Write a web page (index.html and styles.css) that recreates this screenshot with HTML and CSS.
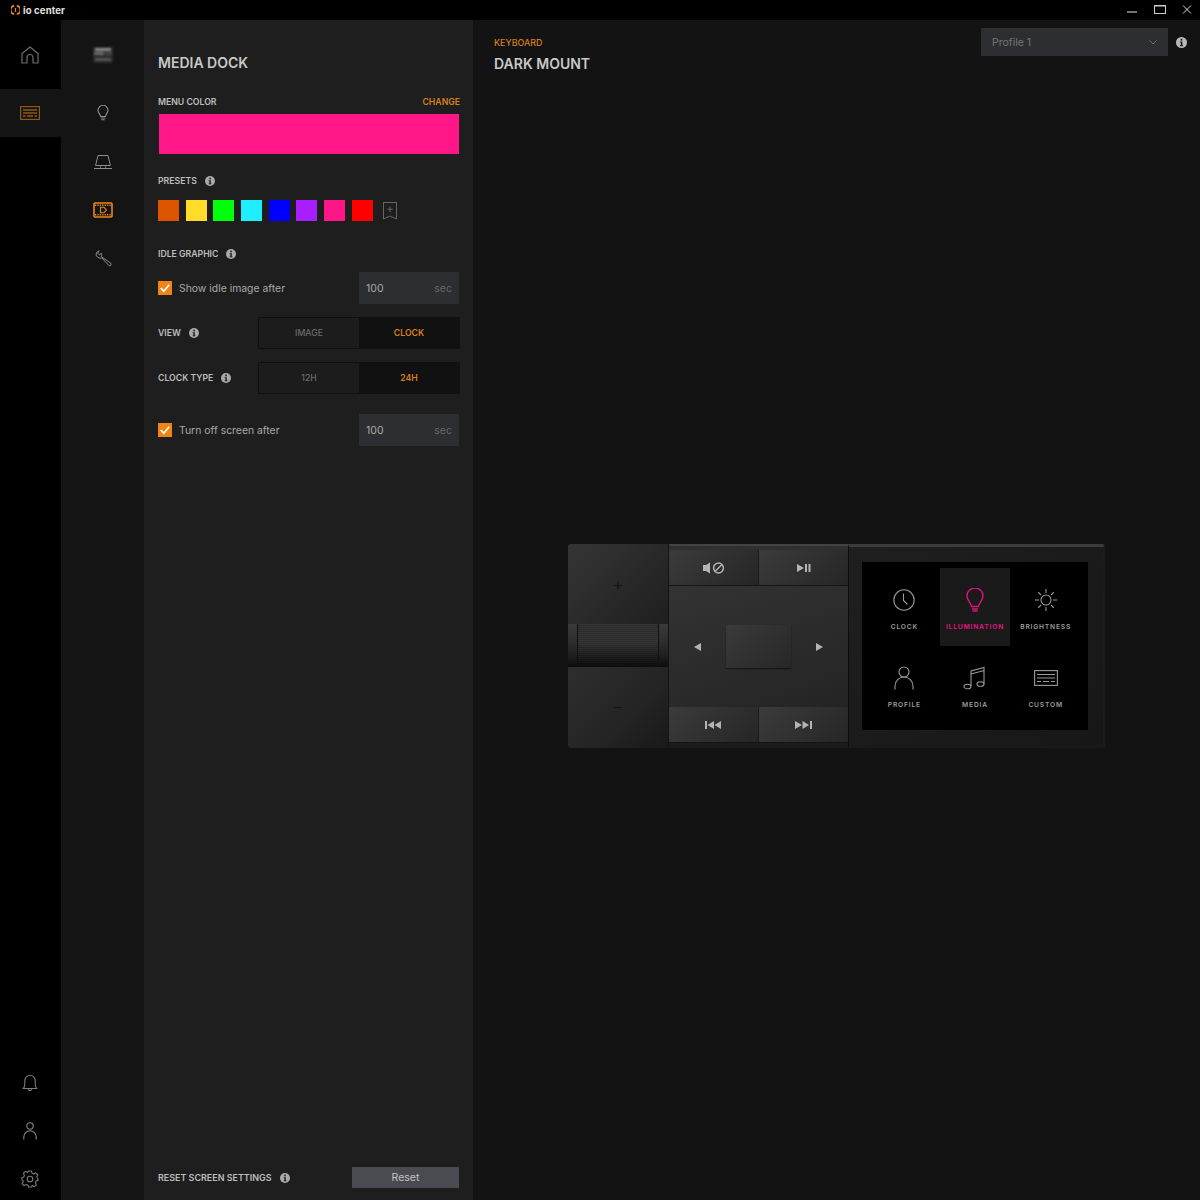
FILE: index.html
```html
<!DOCTYPE html>
<html lang="en">
<head>
    <meta charset="UTF-8">
    <meta name="viewport" content="width=device-width, initial-scale=1.0">
    <title>io center</title>
    <link rel="stylesheet" href="styles.css">
</head>
<body>
    <svg class="defs" width="0" height="0">
        <symbol id="info" viewBox="0 0 10 10">
            <circle cx="5" cy="5" r="5" fill="currentColor"/>
            <rect x="4.2" y="1.7" width="1.6" height="1.6" fill="#1e1e1e"/>
            <path d="M3.6 4.2H5.8V7.4H6.5V8.3H3.6V7.4H4.3V5.1H3.6Z" fill="#1e1e1e"/>
        </symbol>
    </svg>

    <header class="titlebar">
        <div class="brand">
            <svg width="9" height="10" viewBox="0 0 9 10" fill="none" stroke="#e8811a" stroke-width="2">
                <path d="M3.2 1.1A3.7 3.9 0 0 0 3.2 8.9M5.8 1.1A3.7 3.9 0 0 1 5.8 8.9"/>
                <path d="M4.5 3V7" stroke-width="1.2"/>
            </svg>
            <span>io center</span>
        </div>
        <div class="window-controls">
            <svg width="12" height="12" viewBox="0 0 12 12"><path d="M1 8H11" stroke="#e6e6e6" stroke-width="1"/></svg>
            <svg width="12" height="12" viewBox="0 0 12 12" fill="none"><rect x="0.5" y="1.5" width="11" height="8" stroke="#d0d0d0"/><path d="M0 2H12" stroke="#d0d0d0"/></svg>
            <svg width="12" height="12" viewBox="0 0 12 12" fill="none"><path d="M2 1.5L10 9.5M10 1.5L2 9.5" stroke="#d8d8d8"/></svg>
        </div>
    </header>

    <div class="app">
        <nav class="rail">
            <div class="rail-item home">
                <svg width="20" height="20" viewBox="0 0 20 20" fill="none" stroke="#6e6e6e" stroke-width="1.2">
                    <path d="M2 8.5L10 2L18 8.5V18H13V12.5A3 3 0 0 0 7 12.5V18H2Z" stroke-linejoin="round"/>
                </svg>
            </div>
            <div class="rail-item active">
                <svg width="20" height="14" viewBox="0 0 20 14" fill="none" stroke="#8f5716" stroke-width="1.2">
                    <rect x="0.6" y="0.6" width="18.8" height="12.8"/>
                    <path d="M3 4H17M3 7H17" stroke-width="1.3"/>
                    <path d="M3 10H5.5M7 10H13M14.5 10H17" stroke-width="1.3"/>
                </svg>
            </div>
            <div class="rail-bottom">
                <div class="rail-item">
                    <svg width="16" height="18" viewBox="0 0 16 18" fill="none" stroke="#7c7c7c" stroke-width="1.1">
                        <path d="M1 14.5C2.5 13.5 2.8 12 2.8 10V6.5A5.2 5.2 0 0 1 13.2 6.5V10C13.2 12 13.5 13.5 15 14.5Z" stroke-linejoin="round"/>
                        <path d="M6.3 15.2A1.8 1.8 0 0 0 9.7 15.2"/>
                    </svg>
                </div>
                <div class="rail-item">
                    <svg width="14" height="18" viewBox="0 0 14 18" fill="none" stroke="#8a8a8a" stroke-width="1.1">
                        <circle cx="7" cy="4" r="3.2"/>
                        <path d="M0.8 17.5V15A6.2 6.2 0 0 1 13.2 15V17.5"/>
                    </svg>
                </div>
                <div class="rail-item">
                    <svg width="18" height="18" viewBox="0 0 18 18" fill="none" stroke="#7c7c7c" stroke-width="1.1">
                        <circle cx="9" cy="9" r="2.8"/>
                        <path d="M7.5 1H10.5L11 3.2L12.9 4L14.8 2.8L16.9 5L15.7 6.8L16.5 8L17 9.7V10.4L15 11L14.3 12.8L15.4 14.8L13.2 16.7L11.3 15.6L10.5 17H7.5L7 15.2L5 14.4L3 15.7L1 13.6L2.3 11.7L1.7 10.4L0.9 10V7.7L2.8 7L3.4 5.2L2.4 3.2L4.6 1.3L6.5 2.5Z" stroke-linejoin="round"/>
                    </svg>
                </div>
            </div>
        </nav>

        <nav class="subrail">
            <div class="subrail-item">
                <svg class="thumb" width="24" height="20" viewBox="0 0 24 20">
                    <rect x="2" y="2" width="20" height="16" fill="#2a2a2a"/>
                    <rect x="4" y="3" width="16" height="3" fill="#8a8a8a"/>
                    <rect x="3" y="7" width="10" height="3" fill="#6c6c6c"/>
                    <rect x="14" y="7" width="7" height="3" fill="#484848"/>
                    <rect x="4" y="13" width="16" height="3" fill="#565656"/>
                </svg>
            </div>
            <div class="subrail-item">
                <svg width="12" height="16" viewBox="0 0 12 16" fill="none" stroke="#8d8d8d" stroke-width="1.1">
                    <path d="M3.6 11.5C3.4 9 1 8 1 5.3A5 5 0 0 1 11 5.3C11 8 8.6 9 8.4 11.5Z"/>
                    <path d="M3.8 13H8.2M4.3 14.8H7.7"/>
                </svg>
            </div>
            <div class="subrail-item">
                <svg width="18" height="16" viewBox="0 0 18 16" fill="none" stroke="#8d8d8d" stroke-width="1">
                    <path d="M1.6 11.5L4 1.5H14L16.4 11.5Z" stroke-linejoin="round"/>
                    <path d="M0 14.5H18"/>
                    <path d="M6.5 11.5V14.5M11.5 11.5V14.5" stroke-width="0.7"/>
                </svg>
            </div>
            <div class="subrail-item">
                <svg width="20" height="16" viewBox="0 0 20 16" fill="none" stroke="#e8871e">
                    <rect x="1" y="1" width="18" height="14" rx="1" stroke-width="1.6"/>
                    <path d="M2 3.2H18M2 12.8H18" stroke-width="1.6" stroke-dasharray="1.3 1.1"/>
                    <path d="M7.5 5.3H11L13.5 8L11 10.7H7.5Z" stroke-width="1.1"/>
                </svg>
            </div>
            <div class="subrail-item">
                <svg width="17" height="17" viewBox="0 0 17 17" fill="none" stroke="#8d8d8d" stroke-width="1" stroke-linejoin="round">
                    <path d="M4.2 0.8L2.6 3L4.4 5L6.4 3.2C7 4.4 6.8 5.6 6 6.4L15.9 13.3C16.8 14.4 15.4 16.6 14 15.7L6.9 8C5.3 8.6 2.7 8 1.4 5.8C0.4 3.6 2.2 1 4.2 0.8Z"/>
                </svg>
            </div>
        </nav>

        <aside class="panel">
            <h2 class="panel-title">MEDIA DOCK</h2>

            <div class="label-row color-head">
                <span class="label">MENU COLOR</span>
                <span class="label link">CHANGE</span>
            </div>
            <div class="color-bar"></div>

            <div class="label-row presets-head">
                <span class="label">PRESETS</span>
                <svg class="info"><use href="#info"/></svg>
            </div>
            <div class="presets">
                <span class="swatch c-orange"></span>
                <span class="swatch c-yellow"></span>
                <span class="swatch c-green"></span>
                <span class="swatch c-cyan"></span>
                <span class="swatch c-blue"></span>
                <span class="swatch c-purple"></span>
                <span class="swatch c-pink"></span>
                <span class="swatch c-red"></span>
                <svg class="bookmark" width="14" height="18" viewBox="0 0 14 18" fill="none" stroke="#666">
                    <path d="M0.5 0.5H13.5V17L7 14L0.5 17Z"/>
                    <path d="M7 4.5V10M4.2 7.2H9.8"/>
                </svg>
            </div>

            <div class="label-row idle-head">
                <span class="label">IDLE GRAPHIC</span>
                <svg class="info"><use href="#info"/></svg>
            </div>
            <div class="check-row first">
                <label class="check">
                    <span class="box"><svg width="14" height="14" viewBox="0 0 14 14" fill="none"><path d="M2.8 7L5.8 10.2L11.2 3.8" stroke="#fff" stroke-width="1.7"/></svg></span>
                    Show idle image after
                </label>
                <div class="number"><span>100</span><span class="unit">sec</span></div>
            </div>

            <div class="toggle-row view-row">
                <div class="toggle-label">
                    <span class="label">VIEW</span>
                    <svg class="info"><use href="#info"/></svg>
                </div>
                <div class="toggle">
                    <span>IMAGE</span>
                    <span class="on">CLOCK</span>
                </div>
            </div>
            <div class="toggle-row type-row">
                <div class="toggle-label">
                    <span class="label">CLOCK TYPE</span>
                    <svg class="info"><use href="#info"/></svg>
                </div>
                <div class="toggle">
                    <span>12H</span>
                    <span class="on">24H</span>
                </div>
            </div>

            <div class="check-row last">
                <label class="check">
                    <span class="box"><svg width="14" height="14" viewBox="0 0 14 14" fill="none"><path d="M2.8 7L5.8 10.2L11.2 3.8" stroke="#fff" stroke-width="1.7"/></svg></span>
                    Turn off screen after
                </label>
                <div class="number"><span>100</span><span class="unit">sec</span></div>
            </div>

            <div class="reset-row">
                <div class="toggle-label">
                    <span class="label wide">RESET SCREEN SETTINGS</span>
                    <svg class="info"><use href="#info"/></svg>
                </div>
                <button class="reset">Reset</button>
            </div>
        </aside>

        <main class="main">
            <div class="main-head">
                <div>
                    <div class="crumb">KEYBOARD</div>
                    <h1 class="device">DARK MOUNT</h1>
                </div>
                <div class="profile-wrap">
                    <div class="profile">
                        <span>Profile 1</span>
                        <svg width="8" height="5" viewBox="0 0 8 5" fill="none"><path d="M0.5 0.5L4 4L7.5 0.5" stroke="#6f7073"/></svg>
                    </div>
                    <svg class="info big"><use href="#info"/></svg>
                </div>
            </div>

            <div class="stage">
                <div class="dock">
                    <div class="volume">
                        <div class="vol-btn plus">+</div>
                        <div class="roller"><div class="roller-grip"></div></div>
                        <div class="vol-btn minus">&minus;</div>
                    </div>

                    <div class="controls">
                        <div class="btn-row top">
                            <div class="btn">
                                <svg width="22" height="12" viewBox="0 0 22 12" fill="none">
                                    <path d="M0 3H3L7 0.5V11.5L3 9H0Z" fill="#b4b4b4"/>
                                    <circle cx="15.5" cy="6" r="4.9" stroke="#b4b4b4" stroke-width="1.5"/>
                                    <path d="M12 9.5L19 2.5" stroke="#b4b4b4" stroke-width="1.5"/>
                                </svg>
                            </div>
                            <div class="btn">
                                <svg width="14" height="8" viewBox="0 0 14 8" fill="#b4b4b4"><path d="M0 0L7 4L0 8Z"/><rect x="8" width="2" height="8"/><rect x="11.5" width="2" height="8"/></svg>
                            </div>
                        </div>
                        <div class="pad">
                            <svg width="7" height="8" viewBox="0 0 7 8" fill="#b4b4b4"><path d="M7 0V8L0 4Z"/></svg>
                            <div class="pad-center"></div>
                            <svg width="7" height="8" viewBox="0 0 7 8" fill="#b4b4b4"><path d="M0 0V8L7 4Z"/></svg>
                        </div>
                        <div class="btn-row bottom">
                            <div class="btn">
                                <svg width="17" height="8" viewBox="0 0 17 8" fill="#b4b4b4"><rect width="2" height="8"/><path d="M9 0V8L2.5 4Z"/><path d="M16 0V8L9.5 4Z"/></svg>
                            </div>
                            <div class="btn">
                                <svg width="17" height="8" viewBox="0 0 17 8" fill="#b4b4b4"><path d="M0 0V8L7 4Z"/><path d="M7.5 0V8L14 4Z"/><rect x="15" width="2" height="8"/></svg>
                            </div>
                        </div>
                    </div>

                    <div class="screen-frame">
                        <div class="screen">
                            <div class="tile">
                                <svg width="22" height="22" viewBox="0 0 22 22" fill="none" stroke="#9a9a9a" stroke-width="1.1">
                                    <circle cx="11" cy="11" r="10.2"/>
                                    <path d="M10.5 4.5V11.5L14.5 15.5"/>
                                </svg>
                                <span>CLOCK</span>
                            </div>
                            <div class="tile selected">
                                <svg width="18" height="24" viewBox="0 0 18 24" fill="none" stroke="#d9147c" stroke-width="1.4">
                                    <path d="M5.5 18.5C5 14.5 1 12.5 1 8A8 8 0 0 1 17 8C17 12.5 13 14.5 12.5 18.5Z"/>
                                    <path d="M6 21H12M6.5 23H11.5"/>
                                </svg>
                                <span>ILLUMINATION</span>
                            </div>
                            <div class="tile">
                                <svg width="24" height="24" viewBox="0 0 24 24" fill="none" stroke="#9a9a9a" stroke-width="1.1">
                                    <circle cx="12" cy="12" r="5"/>
                                    <path d="M12 1V5M12 19V23M1 12H5M19 12H23M4.2 4.2L7 7M17 17L19.8 19.8M4.2 19.8L7 17M17 7L19.8 4.2"/>
                                </svg>
                                <span>BRIGHTNESS</span>
                            </div>
                            <div class="tile">
                                <svg width="20" height="24" viewBox="0 0 20 24" fill="none" stroke="#9a9a9a" stroke-width="1.1">
                                    <circle cx="10" cy="6" r="5"/>
                                    <path d="M1 23.5V20A9 9 0 0 1 19 20V23.5"/>
                                </svg>
                                <span>PROFILE</span>
                            </div>
                            <div class="tile">
                                <svg width="24" height="24" viewBox="0 0 24 24" fill="none" stroke="#9a9a9a" stroke-width="1.1">
                                    <ellipse cx="4.5" cy="20.5" rx="3.5" ry="2.3"/>
                                    <ellipse cx="17.5" cy="18" rx="3.5" ry="2.3"/>
                                    <path d="M8 20V5L21 1.5V18M8 8L21 4.5"/>
                                </svg>
                                <span>MEDIA</span>
                            </div>
                            <div class="tile">
                                <svg width="24" height="16" viewBox="0 0 24 16" fill="none" stroke="#9a9a9a" stroke-width="1.1">
                                    <rect x="0.6" y="0.6" width="22.8" height="14.8"/>
                                    <path d="M3 4.5H21M3 8H21"/>
                                    <path d="M3 11.5H7M9 11.5H15M17 11.5H21"/>
                                </svg>
                                <span>CUSTOM</span>
                            </div>
                        </div>
                    </div>
                </div>
            </div>
        </main>
    </div>
</body>
</html>
```
FILE: styles.css
```css
* {
    box-sizing: border-box;
}
html, body {
    height: 100%;
}
body {
    margin: 0;
    display: flex;
    flex-direction: column;
    background: #000;
    color: #c8c8c8;
    font-family: 'Inter', 'Liberation Sans', sans-serif;
    overflow: hidden;
}
.defs {
    position: absolute;
}

/* title bar */
.titlebar {
    height: 20px;
    flex: none;
    display: flex;
    justify-content: space-between;
    align-items: center;
    background: #000;
}
.brand {
    display: flex;
    align-items: center;
    gap: 3px;
    padding-left: 11px;
    font-size: 9.5px;
    font-weight: 700;
    letter-spacing: 0.15px;
    color: #e4e4e4;
}
.window-controls {
    display: flex;
    gap: 15.5px;
    padding-right: 7px;
}

.app {
    flex: 1;
    display: flex;
    min-height: 0;
}

/* left rail */
.rail {
    width: 61px;
    flex: none;
    display: flex;
    flex-direction: column;
    background: #000;
}
.rail-item {
    height: 48px;
    padding-right: 1px;
    display: flex;
    align-items: center;
    justify-content: center;
}
.rail-item.home {
    margin-top: 11px;
    margin-bottom: 10px;
}
.rail-item.active {
    background: #141414;
}
.rail-bottom {
    margin-top: auto;
    margin-bottom: -3px;
}

.subrail {
    width: 83px;
    flex: none;
    padding-top: 11px;
    background: #141414;
}
.subrail-item {
    height: 48.3px;
    padding-left: 1px;
    display: flex;
    align-items: center;
    justify-content: center;
}
.subrail-item:first-child {
    margin-bottom: 10px;
}
.thumb {
    filter: blur(1px);
}

/* settings panel */
.panel {
    width: 329px;
    flex: none;
    display: flex;
    flex-direction: column;
    padding: 33px 14px 12px;
    background: #1e1e1e;
}
.panel-title {
    margin: 0;
    font-size: 14px;
    line-height: 20px;
    font-weight: 600;
    color: #c9c9c9;
}
.label {
    font-size: 8.7px;
    line-height: 12px;
    font-weight: 600;
    color: #bdbdbd;
    white-space: nowrap;
}
.label.wide {
    font-size: 8.95px;
}
.label.link {
    margin-right: -1px;
    color: #d47f1b;
}
.label-row {
    display: flex;
    align-items: center;
    gap: 8px;
    height: 12px;
}
.color-head {
    justify-content: space-between;
    margin-top: 23px;
}
.color-bar {
    height: 40px;
    margin: 6px 0 0 1px;
    background: #ff1687;
}
.presets-head {
    margin-top: 21px;
}
.info {
    width: 10px;
    height: 10px;
    flex: none;
    color: #a9a9a9;
}
.info.big {
    width: 11px;
    height: 11px;
    color: #b9b9b9;
}
.presets {
    display: flex;
    align-items: center;
    gap: 6.7px;
    margin-top: 13px;
}
.swatch {
    width: 21px;
    height: 21px;
}
.c-orange { background: #dd5400; }
.c-yellow { background: #ffdb2a; }
.c-green { background: #00ff0c; }
.c-cyan { background: #1eeeff; }
.c-blue { background: #0000ff; }
.c-purple { background: #a81eff; }
.c-pink { background: #ff1687; }
.c-red { background: #ff0000; }
.bookmark {
    margin-left: 3px;
}
.idle-head {
    margin-top: 27px;
}

.check-row {
    display: flex;
    justify-content: space-between;
    align-items: center;
    height: 32px;
}
.check-row.first {
    margin-top: 12px;
}
.check-row.last {
    margin-top: 20px;
}
.check {
    display: flex;
    align-items: center;
    gap: 7px;
    font-size: 10.4px;
    color: #a8a8a8;
}
.box {
    width: 14px;
    height: 14px;
    display: block;
    background: #f08414;
}
.box svg {
    display: block;
}
.number {
    width: 100px;
    height: 32px;
    display: flex;
    justify-content: space-between;
    align-items: center;
    padding: 0 7px;
    background: #2d2e31;
    font-size: 10.5px;
    color: #a8a8a8;
}
.unit {
    color: #66676a;
}

.toggle-row {
    display: flex;
    justify-content: space-between;
    align-items: center;
}
.view-row {
    margin-top: 13px;
}
.type-row {
    margin-top: 13px;
}
.toggle-label {
    display: flex;
    align-items: center;
    gap: 8px;
}
.toggle {
    width: 202px;
    height: 32px;
    margin-right: -1px;
    display: flex;
    padding: 1px;
    background: #111;
    font-size: 8.7px;
    font-weight: 500;
}
.toggle span {
    flex: 1;
    display: flex;
    align-items: center;
    justify-content: center;
    background: #1c1c1c;
    color: #6b6b6b;
}
.toggle .on {
    background: #111;
    color: #d47f1b;
    font-weight: 600;
}

.reset-row {
    margin-top: auto;
    display: flex;
    justify-content: space-between;
    align-items: center;
}
.reset {
    width: 107px;
    height: 21px;
    padding: 0;
    border: 0;
    background: #4a4b50;
    color: #c4c4c4;
    font-family: inherit;
    font-size: 10.5px;
}

/* main area */
.main {
    flex: 1;
    min-width: 0;
    display: flex;
    flex-direction: column;
    background: #131313;
}
.main-head {
    display: flex;
    justify-content: space-between;
    padding: 8px 13px 0 21px;
}
.crumb {
    margin-top: 9px;
    font-size: 8.9px;
    line-height: 12px;
    font-weight: 500;
    color: #d47f1b;
}
.device {
    margin: 5px 0 0;
    font-size: 14px;
    line-height: 20px;
    font-weight: 600;
    color: #c9c9c9;
}
.profile-wrap {
    display: flex;
    align-items: center;
    align-self: flex-start;
    gap: 8px;
}
.profile {
    width: 187px;
    height: 28px;
    display: flex;
    justify-content: space-between;
    align-items: center;
    padding: 0 11px;
    background: #2d2e31;
    font-size: 10.5px;
    color: #75767a;
}

.stage {
    display: flex;
    justify-content: center;
    margin-top: 470px;
}

/* media dock */
.dock {
    width: 537px;
    height: 204px;
    display: flex;
    background: #161616;
    border-radius: 3px;
    overflow: hidden;
}
.volume {
    width: 101px;
    flex: none;
    display: flex;
    flex-direction: column;
    border-right: 1px solid #141414;
}
.vol-btn {
    display: flex;
    align-items: center;
    justify-content: center;
    font-size: 18px;
    font-weight: 300;
    color: #141414;
}
.plus {
    height: 80px;
    flex: none;
    background: linear-gradient(135deg, #353535 0%, #282828 60%, #1f1f1f 100%);
}
.minus {
    flex: 1;
    padding-bottom: 3px;
    background: linear-gradient(135deg, #2e2e2e 0%, #242424 60%, #191919 100%);
}
.roller {
    height: 43px;
    flex: none;
    padding: 0 9px;
    background: linear-gradient(180deg, #3a3a3a 0%, #2e2e2e 40%, #1e1e1e 75%, #0c0c0c 100%);
}
.roller-grip {
    height: 100%;
    border-left: 1px solid #111;
    border-right: 1px solid #111;
    background:
        linear-gradient(180deg, rgba(0, 0, 0, 0) 45%, rgba(0, 0, 0, 0.75) 100%),
        repeating-linear-gradient(180deg, #363636 0 1px, #2a2a2a 1px 2px);
}

.controls {
    width: 179px;
    flex: none;
    padding-bottom: 5px;
    display: flex;
    flex-direction: column;
    background: linear-gradient(180deg, #434343 0 2px, #303030 2px 6px, #1b1b1b 6px);
}
.btn-row {
    height: 36px;
    flex: none;
    display: flex;
    gap: 1px;
}
.btn-row.top {
    margin-top: 6px;
}
.btn {
    flex: 1;
    display: flex;
    align-items: center;
    justify-content: center;
    background: linear-gradient(135deg, #3b3b3b, #262626);
    border-bottom: 1px solid #151515;
}
.pad {
    flex: 1;
    display: flex;
    justify-content: space-between;
    align-items: center;
    padding: 0 25px;
    background: linear-gradient(160deg, #333, #242424);
}
.pad-center {
    width: 65px;
    height: 43px;
    background: linear-gradient(135deg, #3a3a3a, #272727);
    box-shadow: 0 1px 1px #161616;
}

.screen-frame {
    flex: 1;
    padding: 15px 15px 15px 13px;
    background: linear-gradient(135deg, #1f1f1f, #171717);
    border-top: 3px solid #3c3c3c;
    border-left: 1px solid #0c0c0c;
    border-right: 2px solid #1c1c1c;
    border-bottom: 3px solid #1a1a1a;
}
.screen {
    height: 168px;
    padding: 6px 7px;
    display: grid;
    grid-template-columns: repeat(3, 1fr);
    grid-template-rows: 78px 78px;
    background: #000;
}
.tile {
    display: flex;
    flex-direction: column;
    align-items: center;
    justify-content: flex-start;
    padding-top: 20px;
    height: 78px;
    font-size: 6.7px;
    font-weight: 600;
    letter-spacing: 0.8px;
    color: #9c9c9c;
    white-space: nowrap;
}
.tile svg {
    height: 24px;
    flex: none;
}
.tile span {
    margin-top: 11px;
    line-height: 8px;
}
.tile.selected {
    background: #1a1a1a;
    color: #d9147c;
    font-weight: 700;
}
```
